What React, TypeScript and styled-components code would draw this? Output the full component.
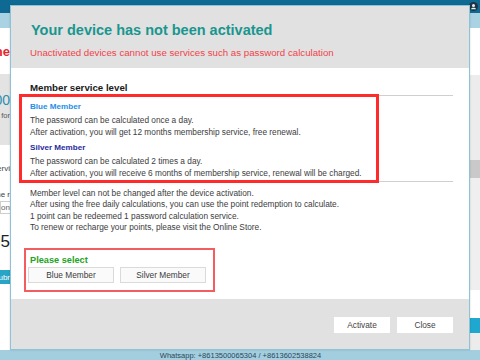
import { createGlobalStyle } from "styled-components";
import styled from "styled-components";

const FONT = `"Liberation Sans", Arial, sans-serif`;

const GlobalStyle = createGlobalStyle`
    html, body {
        margin: 0;
        padding: 0;
        background: #ffffff;
    }
    body {
        font-family: ${FONT};
    }
`;

const Screen = styled.div`
    position: relative;
    width: 480px;
    height: 360px;
    overflow: hidden;
    display: flex;
    flex-direction: column;
    background: #ffffff;
`;

const TopBar = styled.div`
    height: 13px;
    background: #0e6a92;
    display: flex;
    justify-content: flex-end;
    align-items: center;
    padding-right: 2px;
`;

const SubBar = styled.div`
    height: 15px;
    background: #a9d2e2;
`;

const Main = styled.div`
    flex: 1;
    display: flex;
`;

const SideColumn = styled.div<{ $width: number }>`
    width: ${({ $width }) => $width}px;
    display: flex;
    flex-direction: column;
    background: #ffffff;
`;

const CenterArea = styled.div`
    flex: 1;
    background: #ffffff;
`;

const ClipLine = styled.div<{
    $h: number;
    $size?: number;
    $color?: string;
    $bold?: boolean;
    $bg?: string;
}>`
    height: ${({ $h }) => $h}px;
    flex-shrink: 0;
    display: flex;
    align-items: center;
    justify-content: flex-end;
    overflow: hidden;
    white-space: nowrap;
    font-size: ${({ $size }) => $size ?? 8}px;
    font-weight: ${({ $bold }) => ($bold ? 700 : 400)};
    color: ${({ $color }) => $color ?? "#444"};
    background: ${({ $bg }) => $bg ?? "transparent"};
`;

const ClipInput = styled.div`
    height: 11px;
    flex-shrink: 0;
    border: 1px solid #cfcfcf;
    border-right: none;
    display: flex;
    align-items: center;
    justify-content: flex-end;
    overflow: hidden;
    white-space: nowrap;
    font-size: 8px;
    color: #666;
`;

const Band = styled.div<{ $h: number; $bg: string }>`
    height: ${({ $h }) => $h}px;
    background: ${({ $bg }) => $bg};
`;

const StatusBar = styled.div`
    height: 10px;
    background: #a3cee0;
    display: flex;
    align-items: center;
    justify-content: center;
    font-size: 7.5px;
    color: #2b4756;
    padding-left: 1px;
`;

const Dialog = styled.div`
    position: absolute;
    top: 5px;
    left: 10px;
    width: 460px;
    height: 345px;
    box-sizing: border-box;
    border: 1px solid #8ec3d7;
    background: #ffffff;
    display: flex;
    flex-direction: column;
    box-shadow: 0 0 2px rgba(0, 0, 0, 0.15);
`;

const DialogHeader = styled.div`
    height: 62px;
    box-sizing: border-box;
    background: #e1e1e1;
    padding: 15px 0 0 19px;
`;

const Title = styled.div`
    font-size: 14.5px;
    line-height: 18px;
    font-weight: 700;
    color: #18968f;
    margin-left: 1px;
`;

const Subtitle = styled.div`
    margin-top: 8px;
    font-size: 9.7px;
    line-height: 12px;
    color: #f1434b;
`;

const DialogBody = styled.div`
    flex: 1;
    background: #ffffff;
    padding: 14px 16px 0 19px;
`;

const SectionHeading = styled.div`
    font-size: 9.7px;
    line-height: 12px;
    font-weight: 700;
    color: #1a1a1a;
    margin-bottom: 1px;
`;

const TierSection = styled.div`
    position: relative;
    border-top: 1px solid #cfcfcf;
    border-bottom: 1px solid #cfcfcf;
    padding: 5px 0 1.5px;
`;

const Highlight = styled.div`
    position: absolute;
    left: -11px;
    top: -2px;
    width: 360px;
    height: 89px;
    box-sizing: border-box;
    border: 3px solid #ff2a2a;
    pointer-events: none;
`;

const Tier = styled.div`
    & + & {
        margin-top: 3.5px;
    }
`;

const TierName = styled.div<{ $color: string }>`
    font-size: 8.1px;
    line-height: 12.5px;
    font-weight: 700;
    color: ${({ $color }) => $color};
`;

const TextLine = styled.div<{ $lh?: number }>`
    font-size: 8.3px;
    line-height: ${({ $lh }) => $lh ?? 12.5}px;
    color: #3c3c3c;
    white-space: nowrap;
`;

const Notes = styled.div`
    margin-top: 6px;
`;

const SelectBox = styled.div`
    margin: 14.5px 0 0 -6px;
    width: 191px;
    box-sizing: border-box;
    border: 2px solid #f35d5f;
    padding: 4px 2px 7px;
`;

const SelectLabel = styled.div`
    font-size: 9.2px;
    line-height: 12px;
    font-weight: 700;
    color: #23a323;
    margin-left: 2px;
`;

const ChoiceRow = styled.div`
    display: flex;
    gap: 6px;
    margin-top: 1px;
`;

const ChoiceButton = styled.button`
    width: 86px;
    height: 16px;
    box-sizing: border-box;
    border: 1px solid #dadada;
    background: #fafafa;
    font-family: ${FONT};
    font-size: 8.3px;
    color: #3a3a3a;
    padding: 0;
`;

const DialogFooter = styled.div`
    height: 50px;
    box-sizing: border-box;
    background: #e1e1e1;
    display: flex;
    justify-content: flex-end;
    align-items: flex-start;
    gap: 7px;
    padding: 18px 16px 0 0;
`;

const FooterButton = styled.button`
    width: 56px;
    height: 16px;
    border: none;
    background: #ffffff;
    font-family: ${FONT};
    font-size: 8.3px;
    color: #444;
    padding: 0;
`;

const UserIcon = () => (
    <svg width="9" height="9" viewBox="0 0 9 9">
        <circle cx="4.5" cy="4.5" r="4.5" fill="#1c3444" />
        <circle cx="4.5" cy="3.4" r="1.5" fill="#e8eef2" />
        <path d="M2 7.2 C2.4 5.4 6.6 5.4 7 7.2 Z" fill="#e8eef2" />
    </svg>
);

const GRAY = "#e3e3e3";

const App = () => {
    return (
        <>
            <GlobalStyle />
            <Screen>
                <TopBar>
                    <UserIcon />
                </TopBar>
                <SubBar />
                <Main>
                    <SideColumn $width={10}>
                        <ClipLine $h={46} $size={13} $color="#e5262b" $bold>
                            Phone
                        </ClipLine>
                        <ClipLine $h={18} $bg={GRAY} />
                        <ClipLine $h={16} $size={14} $color="#2b8fb0" $bg={GRAY}>
                            400
                        </ClipLine>
                        <ClipLine $h={2} $bg={GRAY} />
                        <ClipLine $h={10} $size={7.5} $color="#555" $bg={GRAY}>
                            for
                        </ClipLine>
                        <ClipLine $h={25} $bg={GRAY} />
                        <ClipLine $h={15} />
                        <ClipLine $h={16} $size={8}>
                            Servi
                        </ClipLine>
                        <ClipLine $h={13} />
                        <ClipLine $h={10} $size={8}>
                            the r
                        </ClipLine>
                        <ClipLine $h={2} />
                        <ClipInput>Phon</ClipInput>
                        <ClipLine $h={16} />
                        <ClipLine $h={24} $size={17} $color="#222">
                            835
                        </ClipLine>
                        <ClipLine $h={16} />
                        <ClipLine $h={14} $size={8} $color="#ffffff" $bg="#27a4c6">
                            Subr
                        </ClipLine>
                    </SideColumn>
                    <CenterArea />
                    <SideColumn $width={10}>
                        <Band $h={47} $bg="#ffffff" />
                        <Band $h={85} $bg="#ececec" />
                        <Band $h={18} $bg="#c9c9c9" />
                        <Band $h={112} $bg="#efefef" />
                        <Band $h={28} $bg="#ffffff" />
                        <Band $h={15} $bg="#1fa8cf" />
                        <Band $h={17} $bg="#ececec" />
                    </SideColumn>
                </Main>
                <StatusBar>Whatsapp: +8613500065304 / +8613602538824</StatusBar>

                <Dialog>
                    <DialogHeader>
                        <Title>Your device has not been activated</Title>
                        <Subtitle>
                            Unactivated devices cannot use services such as password
                            calculation
                        </Subtitle>
                    </DialogHeader>
                    <DialogBody>
                        <SectionHeading>Member service level</SectionHeading>
                        <TierSection>
                            <Tier>
                                <TierName $color="#1e8ee8">Blue Member</TierName>
                                <TextLine>The password can be calculated once a day.</TextLine>
                                <TextLine>
                                    After activation, you will get 12 months membership
                                    service, free renewal.
                                </TextLine>
                            </Tier>
                            <Tier>
                                <TierName $color="#2a2a9e">Silver Member</TierName>
                                <TextLine>The password can be calculated 2 times a day.</TextLine>
                                <TextLine>
                                    After activation, you will receive 6 months of membership
                                    service, renewal will be charged.
                                </TextLine>
                            </Tier>
                            <Highlight />
                        </TierSection>
                        <Notes>
                            <TextLine $lh={11.3}>
                                Member level can not be changed after the device activation.
                            </TextLine>
                            <TextLine $lh={11.3}>
                                After using the free daily calculations, you can use the point
                                redemption to calculate.
                            </TextLine>
                            <TextLine $lh={11.3}>
                                1 point can be redeemed 1 password calculation service.
                            </TextLine>
                            <TextLine $lh={11.3}>
                                To renew or recharge your points, please visit the Online Store.
                            </TextLine>
                        </Notes>
                        <SelectBox>
                            <SelectLabel>Please select</SelectLabel>
                            <ChoiceRow>
                                <ChoiceButton>Blue Member</ChoiceButton>
                                <ChoiceButton>Silver Member</ChoiceButton>
                            </ChoiceRow>
                        </SelectBox>
                    </DialogBody>
                    <DialogFooter>
                        <FooterButton>Activate</FooterButton>
                        <FooterButton>Close</FooterButton>
                    </DialogFooter>
                </Dialog>
            </Screen>
        </>
    );
};

export default App;
